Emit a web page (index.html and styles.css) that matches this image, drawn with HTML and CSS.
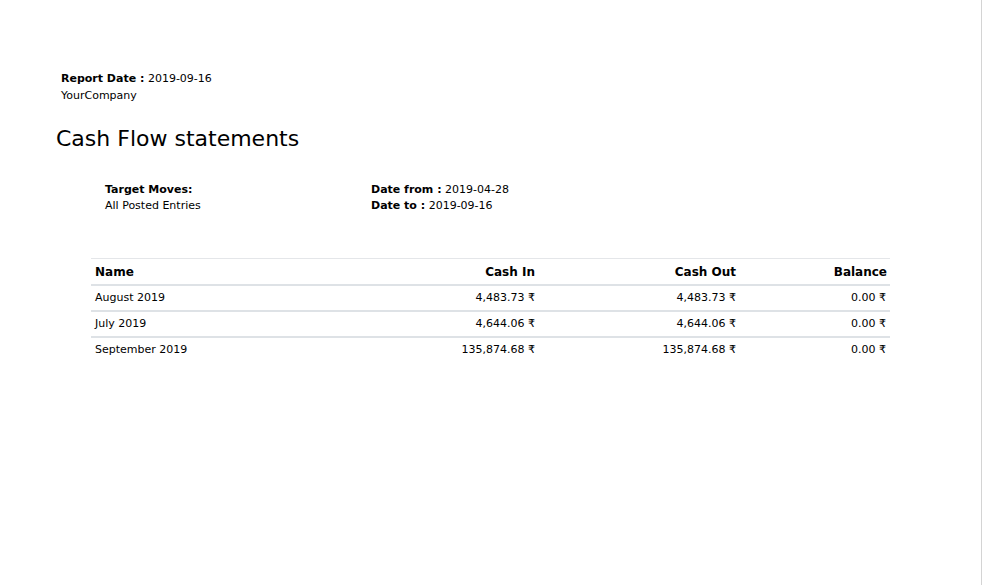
FILE: index.html
```html
<!DOCTYPE html>
<html>
<head>
<meta charset="utf-8">
<link rel="stylesheet" href="styles.css">
</head>
<body>
<div class="page">
  <div class="header">
    <div><b>Report Date :</b> 2019-09-16</div>
    <div>YourCompany</div>
  </div>
  <h2 class="title">Cash Flow statements</h2>
  <div class="filters">
    <div class="filter-col first">
      <div><b>Target Moves:</b></div>
      <div>All Posted Entries</div>
    </div>
    <div class="filter-col">
      <div><b>Date from :</b> 2019-04-28</div>
      <div><b>Date to :</b> 2019-09-16</div>
    </div>
  </div>
  <table class="report">
    <thead>
      <tr>
        <th class="c-name">Name</th>
        <th class="c-in num">Cash In</th>
        <th class="c-out num">Cash Out</th>
        <th class="c-bal num">Balance</th>
      </tr>
    </thead>
    <tbody>
      <tr><td>August 2019</td><td class="num">4,483.73 ₹</td><td class="num">4,483.73 ₹</td><td class="num">0.00 ₹</td></tr>
      <tr><td>July 2019</td><td class="num">4,644.06 ₹</td><td class="num">4,644.06 ₹</td><td class="num">0.00 ₹</td></tr>
      <tr><td>September 2019</td><td class="num">135,874.68 ₹</td><td class="num">135,874.68 ₹</td><td class="num">0.00 ₹</td></tr>
    </tbody>
  </table>
</div>
</body>
</html>
```

FILE: styles.css
```css
html, body {
  margin: 0;
  padding: 0;
  background: #ffffff;
}
body {
  font-family: "DejaVu Sans", sans-serif;
  font-size: 11px;
  color: #000;
}
.page {
  box-sizing: border-box;
  width: 982px;
  height: 585px;
  border-right: 1px solid #d4d4d4;
  padding: 70px 0 0 0;
}
.header {
  padding-left: 61px;
  line-height: 17px;
}
.title {
  margin: 20px 0 0 56px;
  font-weight: normal;
  font-size: 22px;
  line-height: 30px;
}
.filters {
  display: flex;
  margin: 28px 0 0 105px;
  line-height: 16px;
}
.filter-col.first {
  width: 266px;
}
.report {
  margin: 44px 0 0 91px;
  width: 799px;
  border-collapse: collapse;
  table-layout: fixed;
}
.report th, .report td {
  padding: 0 4px 1px;
  height: 23px;
  text-align: left;
  vertical-align: middle;
}
.report th {
  font-weight: bold;
  font-size: 12px;
  border-top: 1px solid #e4e6e9;
  border-bottom: 2px solid #dee2e6;
  padding: 0 4px;
  height: 25px;
}
.report tbody td {
  border-top: 2px solid #dee2e6;
}
.report tbody tr:first-child td {
  border-top: none;
}
.report .num {
  text-align: right;
}
.report .c-bal {
  padding-right: 3px;
}
.c-name { width: 242px; }
.c-in { width: 190px; }
.c-out { width: 193px; }
.c-bal { width: 143px; }
```
